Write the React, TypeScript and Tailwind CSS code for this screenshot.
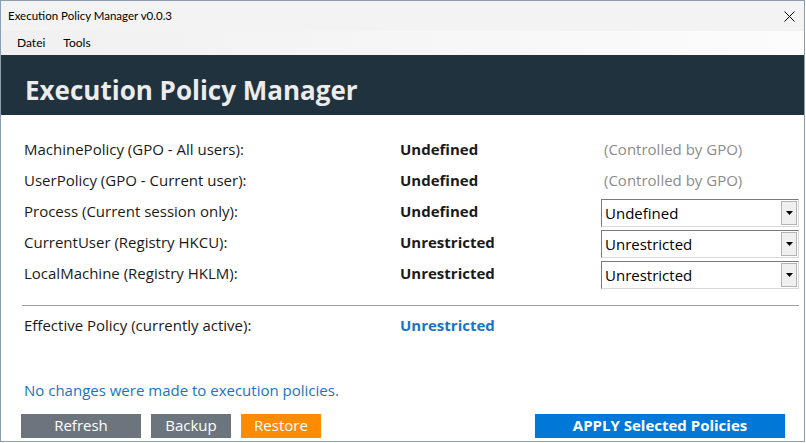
import React from "react";

const rows = [
  { label: "MachinePolicy (GPO - All users):", value: "Undefined", gpo: true },
  { label: "UserPolicy (GPO - Current user):", value: "Undefined", gpo: true },
  { label: "Process (Current session only):", value: "Undefined", gpo: false },
  { label: "CurrentUser (Registry HKCU):", value: "Unrestricted", gpo: false },
  { label: "LocalMachine (Registry HKLM):", value: "Unrestricted", gpo: false },
];

function Dropdown({ value }: { value: string }) {
  return (
    <div className="mt-[2px] flex h-[28px] w-[198px] shrink-0 items-stretch border border-t-[#7a7a7a] border-l-[#7a7a7a] border-r-[#d8d8d8] border-b-[#d8d8d8] bg-white">
      <div className="flex flex-1 items-center pl-[3px] pt-[1px] text-[15px] text-black">{value}</div>
      <div className="my-[1px] mr-[1px] flex w-[16px] items-center justify-center border border-[#b4b4b4] bg-[#f0f0f0]">
        <svg width="7" height="4" viewBox="0 0 7 4">
          <path d="M0 0H7L3.5 4Z" fill="#000" />
        </svg>
      </div>
    </div>
  );
}

export default function App() {
  return (
    <div className="h-[443px] w-[806px] bg-white" style={{ fontFamily: "'Open Sans', 'Noto Sans', sans-serif" }}>
      <div className="flex h-[442px] w-[805px] flex-col border border-[#8d9eaf]">
        <div className="flex h-[30px] items-center justify-between bg-[#f3f3f3] pl-[7px] pr-[9px]">
          <span className="text-[11px] text-black" style={{ fontFamily: "Lato, 'Liberation Sans', sans-serif", fontSize: "11.5px" }}>Execution Policy Manager v0.0.3</span>
          <svg width="11" height="11" viewBox="0 0 11 11">
            <path d="M0.5 0.5L10.5 10.5M10.5 0.5L0.5 10.5" stroke="#000" strokeWidth="1" />
          </svg>
        </div>
        <div className="flex h-[24px] items-center gap-[18px] bg-gradient-to-r from-[#f0f0f0] to-[#fcfcfc] pl-[16px] text-[12px] text-black" style={{ fontFamily: "Lato, 'Liberation Sans', sans-serif" }}>
          <span>Datei</span>
          <span>Tools</span>
        </div>
        <div className="flex h-[60px] items-end bg-[#1f323e] pb-[7px] pl-[24px]">
          <h1 className="text-[26px] font-bold leading-[36px] text-[#ececec]">Execution Policy Manager</h1>
        </div>
        <div className="flex flex-1 flex-col pl-[21px] pr-[5px] pt-[19px]">
          <div className="flex flex-col">
            {rows.map((r) => (
              <div key={r.label} className="flex h-[31px] items-center">
                <div className="w-[378px] shrink-0 pl-[2px] text-[15px] text-[#1a1a1a]">{r.label}</div>
                <div className="w-[201px] shrink-0 text-[15px] font-bold text-[#1a1a1a]">{r.value}</div>
                {r.gpo ? (
                  <div className="pl-[3px] text-[15px] text-[#8c8c8c]">(Controlled by GPO)</div>
                ) : (
                  <Dropdown value={r.value} />
                )}
              </div>
            ))}
          </div>
          <div className="mt-[16px] h-px bg-[#a0a0a0]" />
          <div className="mt-[7px] flex h-[24px] items-center">
            <div className="w-[378px] shrink-0 pl-[2px] text-[15px] text-[#1a1a1a]">Effective Policy (currently active):</div>
            <div className="text-[15px] font-bold text-[#1874c6]">Unrestricted</div>
          </div>
          <div className="mt-[42px] pl-[2px] text-[15px] text-[#1874c6]">No changes were made to execution policies.</div>
          <div className="mt-[12px] flex items-center">
            <button className="-ml-[1px] h-[24px] w-[120px] bg-[#6c757d] text-[15px] text-white">Refresh</button>
            <button className="ml-[10px] h-[24px] w-[80px] bg-[#6c757d] text-[15px] text-white">Backup</button>
            <button className="ml-[10px] h-[24px] w-[80px] bg-[#ff8c00] text-[15px] text-white">Restore</button>
            <button className="ml-auto mr-[14px] h-[24px] w-[250px] bg-[#0078d7] text-[15px] font-bold text-white">APPLY Selected Policies</button>
          </div>
        </div>
      </div>
    </div>
  );
}
